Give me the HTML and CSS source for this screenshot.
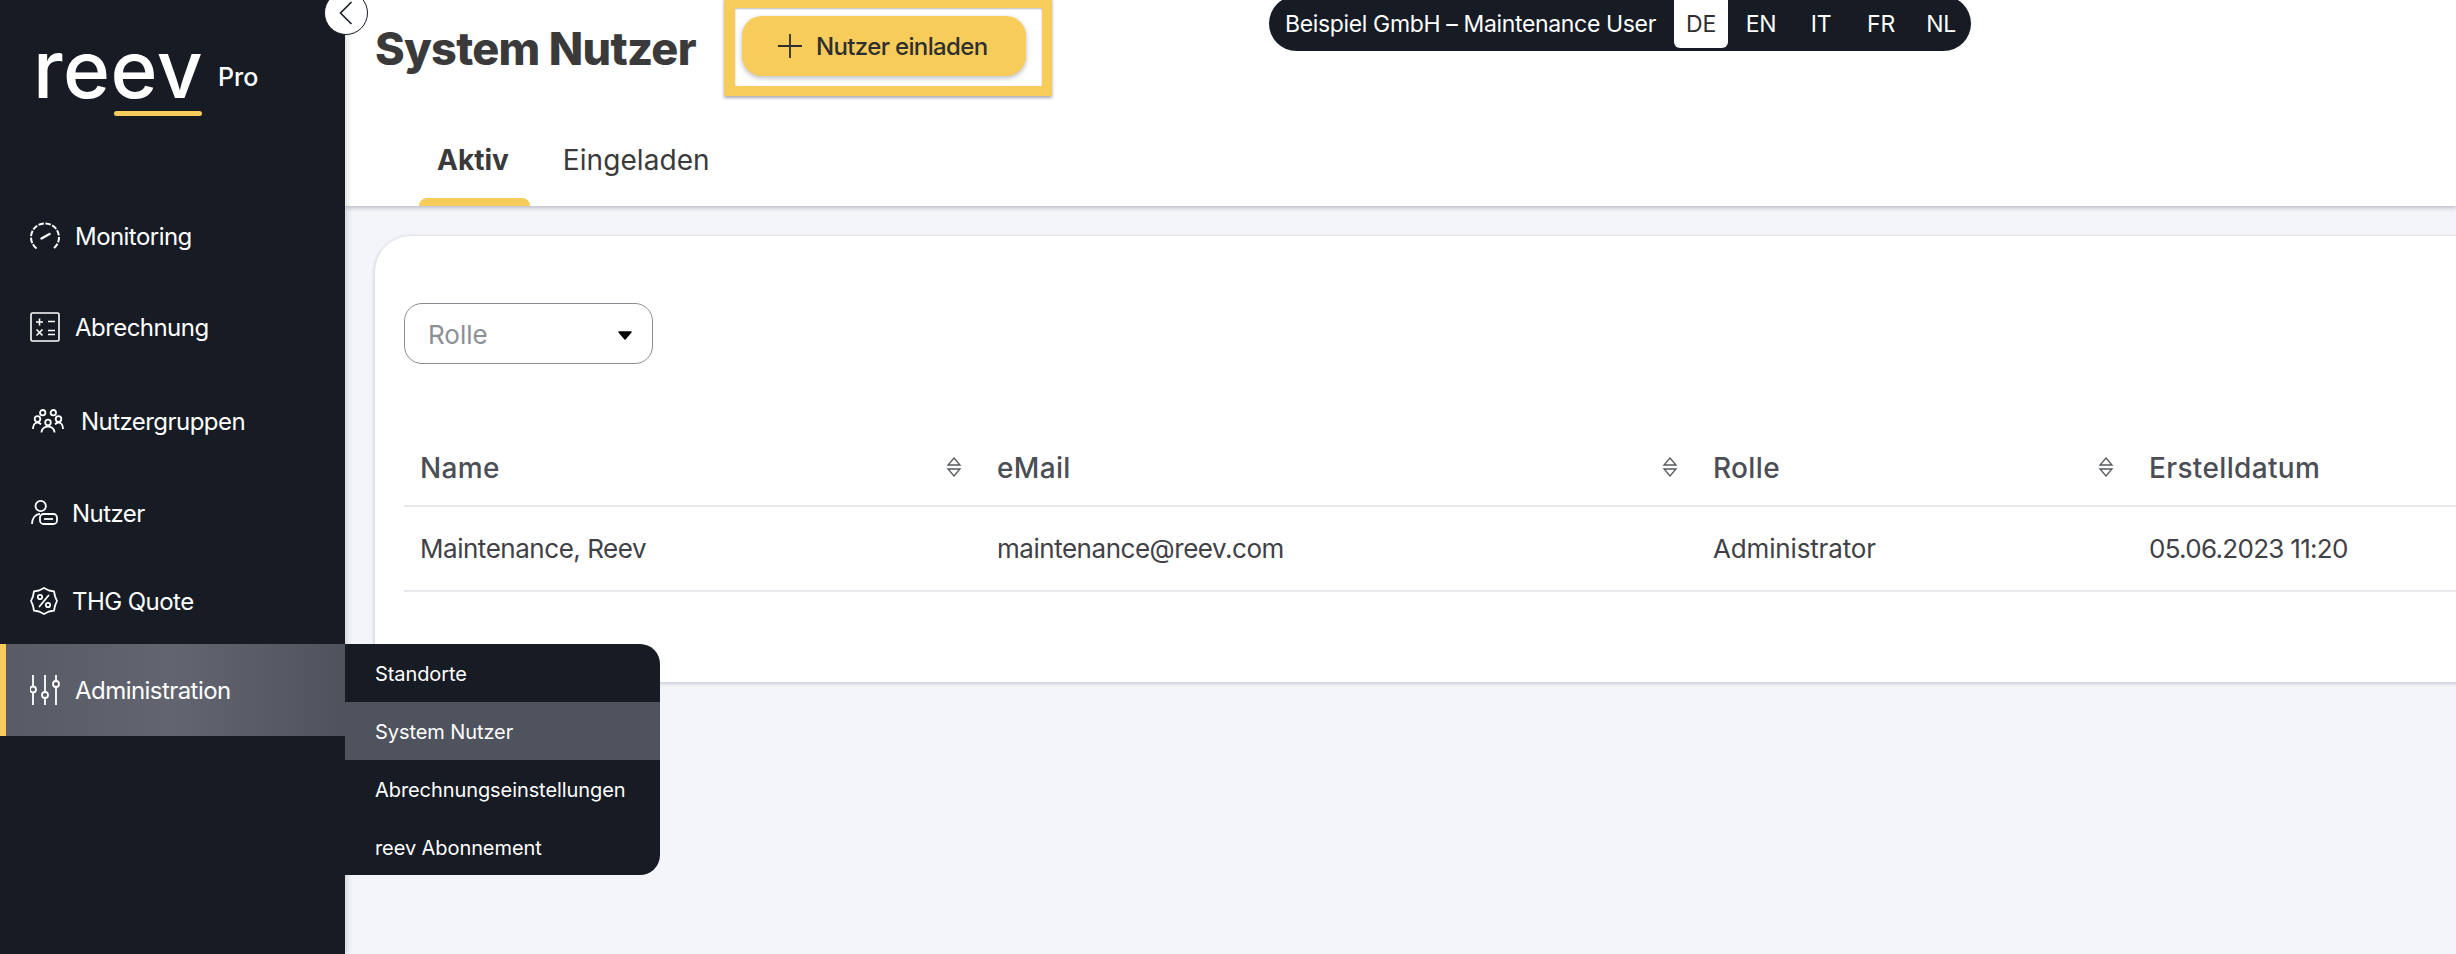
FILE: index.html
```html
<!DOCTYPE html>
<html lang="de">
<head>
<meta charset="utf-8">
<title>System Nutzer</title>
<link rel="stylesheet" href="styles.css">
</head>
<body>
<div class="app">
  <aside class="sidebar">
    <div class="brand">
      <div class="logo"><span class="logo-word">reev</span><span class="logo-bar"></span></div>
      <span class="logo-pro">Pro</span>
    </div>
    <nav class="nav">
      <a class="nav-item n-mon">
        <svg class="ico" viewBox="0 0 30 30" fill="none" stroke="#fff" stroke-width="2"><path d="M6.500 27.500A14 14 0 1 1 23.500 27.500" stroke-dasharray="5.500 1.500"/><path d="M11.500 17.500 19.500 13" stroke-width="2.400" stroke-linecap="round"/></svg>
        <span>Monitoring</span>
      </a>
      <a class="nav-item n-abr">
        <svg class="ico" viewBox="0 0 30 30" fill="none" stroke="#fff" stroke-width="1.600"><rect x="1" y="1" width="28" height="28" rx="1.500"/><path d="M6 10h7M9.500 6.500v7M18 9.500h7M6.500 17.500l6 6M12.500 17.500l-6 6M18 18.500h7M18 22.500h7"/></svg>
        <span>Abrechnung</span>
      </a>
      <a class="nav-item n-grp">
        <svg class="ico ico-wide" viewBox="0 0 32 24" fill="none" stroke="#fff" stroke-width="1.800"><circle cx="10.700" cy="3.700" r="2.700"/><circle cx="21.300" cy="3.700" r="2.700"/><circle cx="5.500" cy="10" r="2.800"/><circle cx="26.500" cy="10" r="2.800"/><circle cx="16" cy="13.500" r="2.800"/><path d="M1 20c0-4 2-6.500 4.500-6.500 1.500 0 2.500.7 3.500 1.800M31 20c0-4-2-6.500-4.500-6.500-1.500 0-2.500.7-3.500 1.800M9.500 23.500c0-3.500 3-6 6.500-6s6.500 2.500 6.500 6"/></svg>
        <span>Nutzergruppen</span>
      </a>
      <a class="nav-item n-usr">
        <svg class="ico ico-user" viewBox="0 0 30 28" fill="none" stroke="#fff" stroke-width="1.800"><circle cx="10.700" cy="7" r="5.200"/><path d="M2 25c0-6 3.500-10 8-10"/><rect x="10" y="15" width="17" height="10" rx="3.500"/><path d="M14 20h9"/></svg>
        <span>Nutzer</span>
      </a>
      <a class="nav-item n-thg">
        <svg class="ico ico-thg" viewBox="0 0 28 28" fill="none" stroke="#fff" stroke-width="1.800" stroke-linecap="round"><path d="M9 3.500 14 1l5 2.500 5 .8 1 5L27 14l-2 4.700-1 5-5 .8-5 2.500-5-2.500-5-.8-1-5L1 14l2-4.700 1-5z" stroke-linejoin="round"/><path d="M18.500 8.500 9.500 19.500"/><circle cx="10" cy="10" r="2.200"/><circle cx="18" cy="18" r="2.200"/></svg>
        <span>THG Quote</span>
      </a>
      <a class="nav-item n-adm is-active">
        <svg class="ico" viewBox="0 0 30 30" fill="none" stroke="#fff" stroke-width="1.800"><path d="M3 0v11.500M3 17.500V30M15 0v17M15 23v7M26 0v6M26 12v18"/><circle cx="3" cy="14.500" r="3"/><circle cx="15" cy="20" r="3"/><circle cx="26" cy="9" r="3"/></svg>
        <span>Administration</span>
      </a>
    </nav>
  </aside>

  <button class="collapse" aria-label="Menü einklappen">
    <svg viewBox="0 0 14 24" width="14" height="24" fill="none" stroke="#161b24" stroke-width="1.600"><path d="M12.500 1 1.500 12l11 11"/></svg>
  </button>

  <div class="flyout">
    <a class="fly-item">Standorte</a>
    <a class="fly-item is-current">System Nutzer</a>
    <a class="fly-item">Abrechnungseinstellungen</a>
    <a class="fly-item">reev Abonnement</a>
  </div>

  <main class="main">
    <header class="header">
      <div class="title-row">
        <h1 class="title">System Nutzer</h1>
        <div class="highlight">
          <button class="invite">
            <svg viewBox="0 0 24 24" width="24" height="24" fill="none" stroke="#2f2f2f" stroke-width="1.800"><path d="M12 0v24M0 12h24"/></svg>
            <span>Nutzer einladen</span>
          </button>
        </div>
      </div>
      <div class="tabs">
        <a class="tab is-on">Aktiv</a>
        <a class="tab">Eingeladen</a>
      </div>
    </header>

    <div class="account">
      <span class="account-name">Beispiel GmbH – Maintenance User</span>
      <a class="lang is-on">DE</a>
      <a class="lang">EN</a>
      <a class="lang">IT</a>
      <a class="lang">FR</a>
      <a class="lang">NL</a>
    </div>

    <section class="card">
      <div class="select">
        <span>Rolle</span>
        <svg viewBox="0 0 14 9" width="14" height="9"><path d="M1 1h12L7 8z" fill="#000" stroke="#000" stroke-width="1.500" stroke-linejoin="round"/></svg>
      </div>
      <table class="table">
        <colgroup>
          <col class="c1"><col class="c2"><col class="c3"><col class="c4">
        </colgroup>
        <thead>
          <tr>
            <th><div class="th-in">Name<svg class="sort" viewBox="0 0 16 20"><path d="M8 1 14 8H2zM2 12h12l-6 7z" fill="none" stroke="#55585f" stroke-width="1.300"/></svg></div></th>
            <th><div class="th-in">eMail<svg class="sort" viewBox="0 0 16 20"><path d="M8 1 14 8H2zM2 12h12l-6 7z" fill="none" stroke="#55585f" stroke-width="1.300"/></svg></div></th>
            <th><div class="th-in">Rolle<svg class="sort" viewBox="0 0 16 20"><path d="M8 1 14 8H2zM2 12h12l-6 7z" fill="none" stroke="#55585f" stroke-width="1.300"/></svg></div></th>
            <th>Erstelldatum</th>
          </tr>
        </thead>
        <tbody>
          <tr>
            <td>Maintenance, Reev</td>
            <td>maintenance@reev.com</td>
            <td class="role">Administrator</td>
            <td class="date">05.06.2023 11:20</td>
          </tr>
        </tbody>
      </table>
    </section>
  </main>
</div>
</body>
</html>
```
FILE: styles.css
```css
* { box-sizing: border-box; }
html, body { margin: 0; height: 100%; }
body {
  font-family: "Inter", "Noto Sans", sans-serif;
  background: #f4f5f9;
  color: #3a3a3a;
  overflow: hidden;
}
a { color: inherit; text-decoration: none; }
button { font: inherit; border: 0; padding: 0; }

.app { position: relative; display: flex; width: 2456px; height: 954px; overflow: hidden; }

/* Sidebar */
.sidebar {
  flex: 0 0 345px;
  background: #161b24;
  color: #fff;
  box-shadow: 2px 0 6px rgba(0,0,0,.15);
  position: relative;
  z-index: 2;
}
.brand { display: flex; align-items: flex-start; height: 190px; padding: 27px 0 0 33px; }
.logo { display: flex; flex-direction: column; align-items: flex-end; width: 169px; }
.logo-word { font-size: 80px; font-weight: 500; line-height: 84px; letter-spacing: 0.6px; align-self: flex-start; }
.logo-bar { width: 88px; height: 5px; border-radius: 3px; background: #f7cc5a; }
.logo-pro { font-size: 25px; font-weight: 500; line-height: 30px; margin: 35px 0 0 16px; }

.nav-item {
  display: flex;
  align-items: center;
  height: 92px;
  padding-left: 30px;
  gap: 15px;
  font-size: 24px;
  font-weight: 400;
  letter-spacing: -0.55px;
}
.n-abr { margin-top: -1px; }
.n-grp { margin-top: 2px; padding-left: 32px; gap: 17px; }
.n-thg { margin-top: -4px; gap: 14px; }
.n-adm { margin-top: -3px; }
.n-usr { gap: 12px; }
.ico { width: 30px; height: 30px; flex: none; }
.ico-wide { width: 32px; height: 24px; }
.ico-user { width: 30px; height: 28px; }
.ico-thg { width: 28px; height: 28px; }
.is-active {
  position: relative;
  background: linear-gradient(90deg, #575b66 0, #62656f 50%, #4f535e 100%);
  box-shadow: inset 6px 0 0 #f7cc5a;
}

.collapse {
  position: absolute;
  left: 324px;
  top: -9px;
  width: 44px;
  height: 44px;
  border-radius: 50%;
  background: #fff;
  border: 1px solid #161b24;
  z-index: 4;
  display: flex;
  align-items: center;
  justify-content: center;
}

/* Flyout */
.flyout {
  position: absolute;
  left: 345px;
  top: 644px;
  width: 315px;
  height: 231px;
  background: #161b24;
  color: #fff;
  border-radius: 0 20px 20px 0;
  z-index: 3;
  overflow: hidden;
  display: flex;
  flex-direction: column;
}
.fly-item { flex: 1; display: flex; align-items: center; padding: 3px 0 0 30px; font-size: 20px; letter-spacing: -0.08px; }
.fly-item.is-current { background: #4f535e; }

/* Main */
.main { flex: 1; min-width: 0; position: relative; }
.header {
  height: 206px;
  background: #fff;
  box-shadow: 0 2px 4px rgba(60,64,90,.3);
  padding-left: 30px;
}
.title-row { display: flex; align-items: flex-start; height: 122px; }
.title { flex: 0 0 321px; margin: 21px 0 0; font-size: 45px; line-height: 56px; font-weight: 800; color: #3a3a3a; letter-spacing: -0.7px; white-space: nowrap; }
.highlight {
  margin: -2px 0 0 28px;
  width: 328px;
  height: 98px;
  border: solid #f7cc5a;
  border-width: 10px 10px 10px 11px;
  background: #fff;
  box-shadow: 0 2px 3px rgba(60,60,80,.45), inset 0 1px 2px rgba(60,60,80,.35);
  padding: 8px 0 0 7px;
}
.invite {
  width: 284px;
  height: 60px;
  border-radius: 20px;
  background: #f7cc5a;
  color: #2f2f2f;
  font-size: 24px;
  font-weight: 500;
  letter-spacing: -0.65px;
  display: flex;
  align-items: center;
  padding-left: 36px;
  gap: 14px;
  box-shadow: 0 2px 5px rgba(60,60,80,.35);
}
.tabs { display: flex; padding-left: 44px; height: 84px; gap: 33px; }
.tab { position: relative; font-size: 28px; line-height: 76px; padding: 0 21px 0 18px; color: #3a3a3a; letter-spacing: 0.08px; }
.tab + .tab { padding: 0; }
.tab.is-on { font-weight: 700; letter-spacing: 0; }
.tab.is-on::after {
  content: "";
  position: absolute;
  left: 0; right: 0; bottom: 0;
  height: 8px;
  background: #f7cc5a;
  border-radius: 8px 8px 0 0;
}

.account {
  position: absolute;
  left: 924px;
  top: -4px;
  width: 702px;
  height: 55px;
  border-radius: 28px;
  background: #161b24;
  color: #fff;
  display: flex;
  align-items: flex-start;
  padding-left: 16px;
  font-size: 23px;
  z-index: 1;
}
.account-name { flex: none; line-height: 56px; width: 389px; white-space: nowrap; letter-spacing: -0.35px; }
.lang { flex: none; width: 54px; height: 52px; line-height: 56px; text-align: center; margin-right: 6px; border-radius: 0 0 6px 6px; letter-spacing: -0.3px; }
.lang.is-on { background: #fff; color: #2f2f2f; }

/* Card */
.card {
  margin: 30px -60px 0 30px;
  height: 446px;
  background: #fff;
  border-radius: 36px 0 0 0;
  box-shadow: 0 1px 4px rgba(60,64,90,.3);
  padding: 67px 0 0 29px;
}
.select {
  width: 249px;
  height: 61px;
  border: 1px solid #8a8d93;
  border-radius: 18px;
  display: flex;
  align-items: center;
  justify-content: space-between;
  padding: 0 20px 0 23px;
  color: #8b9097;
  font-size: 26px;
}
.select span { margin-top: 2px; }
.select svg { margin-top: 4px; }
.table { margin-top: 72px; width: 2112px; border-collapse: collapse; table-layout: fixed; }
.c1 { width: 577px; }
.c2 { width: 716px; }
.c3 { width: 436px; }
th {
  text-align: left;
  height: 70px;
  padding: 0 16px 5px;
  font-size: 28px;
  font-weight: 500;
  letter-spacing: 0.35px;
  color: #4b4e55;
  border-bottom: 2px solid #e8e9ec;
}
.th-in { display: flex; justify-content: space-between; align-items: center; padding-right: 3px; }
.sort { width: 16px; height: 20px; margin-top: -2px; }
td {
  height: 85px;
  padding: 0;
  padding-left: 16px;
  font-size: 26px;
  letter-spacing: -0.47px;
  color: #3f4146;
  border-bottom: 2px solid #e8e9ec;
}
td.role { letter-spacing: -0.15px; }
td.date { letter-spacing: -0.7px; }
```
